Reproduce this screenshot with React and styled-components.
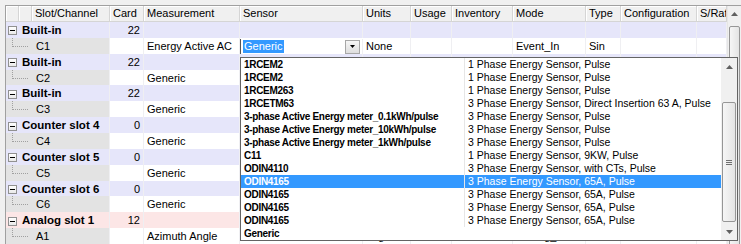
import React from 'react';
import styled, { createGlobalStyle } from 'styled-components';

const GlobalStyle = createGlobalStyle`
  html, body {
    margin: 0;
    padding: 0;
    background: #f0f0f0;
    font-family: "Liberation Sans", Arial, sans-serif;
    font-size: 11px;
    color: #000;
  }
`;

// Column widths of the grid body (first one spans the two blank + slot columns)
const bodyCols = '104px 34px 96px 123px 48px 41px 61px 73px 35px 76px 30px';
const headCols = '13px 13px 78px 34px 96px 123px 48px 41px 61px 73px 35px 76px 30px';

const Page = styled.div`
  padding: 5px 0 0 5px;
  height: 239px;
  overflow: hidden;
`;

const Frame = styled.div`
  position: relative;
  display: flex;
  border-left: 1px solid #a0a0a0;
  border-top: 1px solid #a0a0a0;
  height: 238px;
  background: #ffffff;
`;

const Grid = styled.div`
  width: 721px;
  display: flex;
  flex-direction: column;
`;

const HeaderRow = styled.div`
  display: grid;
  grid-template-columns: ${headCols};
  height: 16px;
  background: #f0f0f0;
`;

const HeadCell = styled.div`
  display: flex;
  align-items: center;
  padding-left: 3px;
  border-right: 1px solid #d5d5d5;
  border-bottom: 1px solid #d5d5d5;
  box-shadow: inset 1px 1px 0 #ffffff;
  white-space: nowrap;
  overflow: hidden;
`;

const rowBg = { group: '#e6e6fa', analog: '#fce6e6', child: '#ffffff' };

const Row = styled.div`
  display: grid;
  grid-template-columns: ${bodyCols};
  height: 16px;
  background: ${p => rowBg[p.$kind]};
`;

const Cell = styled.div`
  display: flex;
  align-items: center;
  justify-content: ${p => (p.$right ? 'flex-end' : 'flex-start')};
  padding: 0 3px;
  border-right: 1px solid #efeff2;
  white-space: nowrap;
  overflow: hidden;
`;

const TreeCell = styled.div`
  display: flex;
  align-items: center;
  border-right: 1px solid #efeff2;
  background: ${p => (p.$child ? '#e3e3e3' : 'transparent')};
  white-space: nowrap;
  overflow: hidden;
`;

const Expander = styled.div`
  width: 7px;
  height: 7px;
  margin: 2px 5px 0 2px;
  border: 1px solid #919191;
  background: linear-gradient(#ffffff, #e9e9e9);
  display: flex;
  align-items: center;
  justify-content: center;
  flex: none;
  &::after {
    content: '';
    width: 5px;
    height: 1px;
    background: #000;
  }
`;

const TreeLine = styled.div`
  align-self: flex-start;
  width: 15px;
  height: 8px;
  margin: 0 8px 0 6px;
  border-left: 1px dotted #a0a0a0;
  border-bottom: 1px dotted #a0a0a0;
  flex: none;
`;

const GroupName = styled.span`
  font-weight: bold;
  font-size: 11.5px;
`;

const Editor = styled.div`
  display: flex;
  align-items: center;
  height: 16px;
  margin-top: 1px;
  background: #fff;
  border-left: 1px solid #555;
  border-right: 1px solid #efeff2;
`;

const Selected = styled.span`
  margin-left: 2px;
  padding: 0 1px;
  background: #3399ff;
  color: #fff;
  line-height: 13px;
`;

const DropButton = styled.div`
  margin-left: auto;
  margin-right: 2px;
  width: 15px;
  height: 14px;
  box-sizing: border-box;
  border: 1px solid #a7a7a7;
  background: linear-gradient(#f6f6f6, #dedede);
  display: flex;
  align-items: center;
  justify-content: center;
`;

const VScroll = styled.div`
  width: 14px;
  display: flex;
  flex-direction: column;
  background: #f0f0f0;
  border-left: 1px solid #e6e6e6;
`;

const ArrowButton = styled.div`
  height: ${p => p.$h || 17}px;
  margin-top: ${p => (p.$end ? 'auto' : '0')};
  display: flex;
  align-items: center;
  justify-content: center;
  flex: none;
`;

const Thumb = styled.div`
  margin: ${p => p.$top}px 1px 0 1px;
  height: ${p => p.$h}px;
  border: 1px solid #969696;
  border-radius: 2px;
  background: linear-gradient(90deg, #f6f6f6, #e4e4e4);
  display: flex;
  flex-direction: column;
  align-items: center;
  justify-content: center;
  gap: 1px;
  flex: none;
`;

const Grip = styled.div`
  width: 6px;
  height: 1px;
  background: #6f6f6f;
`;

const DropList = styled.div`
  position: absolute;
  left: 234px;
  top: 51px;
  width: 496px;
  height: 182px;
  border: 1px solid #646464;
  background: #fff;
  display: flex;
  z-index: 5;
`;

const Items = styled.div`
  width: 480px;
  display: flex;
  flex-direction: column;
`;

const Item = styled.div`
  display: grid;
  grid-template-columns: 223px 1fr;
  height: 13px;
  background: ${p => (p.$sel ? '#3399ff' : 'transparent')};
  color: ${p => (p.$sel ? '#fff' : '#000')};
`;

const ItemName = styled.div`
  font-weight: bold;
  font-size: 10px;
  letter-spacing: -0.3px;
  padding-left: 3px;
  line-height: 13px;
  white-space: nowrap;
  overflow: hidden;
`;

const ItemDesc = styled.div`
  font-size: 10.5px;
  padding-left: 3px;
  line-height: 13px;
  white-space: nowrap;
  border-left: ${p => (p.$empty ? 'none' : '1px solid #e6e6e6')};
`;

const ListScroll = styled.div`
  width: 16px;
  display: flex;
  flex-direction: column;
  background: #f0f0f0;
`;

const Chevron = ({ down }) => (
  <svg width="7" height="4" viewBox="0 0 7 4">
    <path d={down ? 'M0 0h7L3.5 4z' : 'M0 4h7L3.5 0z'} fill="#606060" />
  </svg>
);

// Child rows C2..C6 sit under the open list, so only what shows is filled in
const rows = [
  { kind: 'group', name: 'Built-in', card: '22' },
  { kind: 'child', name: 'C1', meas: 'Energy Active AC', editing: true, units: 'None', mode: 'Event_In', type: 'Sin' },
  { kind: 'group', name: 'Built-in', card: '22' },
  { kind: 'child', name: 'C2', meas: 'Generic' },
  { kind: 'group', name: 'Built-in', card: '22' },
  { kind: 'child', name: 'C3', meas: 'Generic' },
  { kind: 'group', name: 'Counter slot 4', card: '0' },
  { kind: 'child', name: 'C4', meas: 'Generic' },
  { kind: 'group', name: 'Counter slot 5', card: '0' },
  { kind: 'child', name: 'C5', meas: 'Generic' },
  { kind: 'group', name: 'Counter slot 6', card: '0' },
  { kind: 'child', name: 'C6', meas: 'Generic' },
  { kind: 'analog', name: 'Analog slot 1', card: '12' },
  { kind: 'child', name: 'A1', meas: 'Azimuth Angle', sensor: 'Altimeter Azimuth 5V', units: 'deg arc', mode: 'Analog_In', type: '15V', config: 'Differential' },
];

const sensors = [
  ['1RCEM2', '1 Phase Energy Sensor, Pulse'],
  ['1RCEM2', '1 Phase Energy Sensor, Pulse'],
  ['1RCEM263', '1 Phase Energy Sensor, Pulse'],
  ['1RCETM63', '3 Phase Energy Sensor, Direct Insertion 63 A, Pulse'],
  ['3-phase Active Energy meter_0.1kWh/pulse', '3 Phase Energy Sensor, Pulse'],
  ['3-phase Active Energy meter_10kWh/pulse', '3 Phase Energy Sensor, Pulse'],
  ['3-phase Active Energy meter_1kWh/pulse', '3 Phase Energy Sensor, Pulse'],
  ['C11', '1 Phase Energy Sensor, 9KW, Pulse'],
  ['ODIN4110', '3 Phase Energy Sensor, with CTs, Pulse'],
  ['ODIN4165', '3 Phase Energy Sensor, 65A, Pulse'],
  ['ODIN4165', '3 Phase Energy Sensor, 65A, Pulse'],
  ['ODIN4165', '3 Phase Energy Sensor, 65A, Pulse'],
  ['ODIN4165', '3 Phase Energy Sensor, 65A, Pulse'],
  ['Generic', ''],
];

const headers = ['', '', 'Slot/Channel', 'Card', 'Measurement', 'Sensor', 'Units', 'Usage', 'Inventory', 'Mode', 'Type', 'Configuration', 'S/Rate'];

const App = () => (
  <>
    <GlobalStyle />
    <Page>
      <Frame>
        <Grid>
          <HeaderRow>
            {headers.map((h, i) => (
              <HeadCell key={i}>{h}</HeadCell>
            ))}
          </HeaderRow>
          {rows.map((r, i) =>
            r.kind === 'child' ? (
              <Row key={i} $kind="child">
                <TreeCell $child>
                  <TreeLine />
                  {r.name}
                </TreeCell>
                <Cell />
                <Cell>{r.meas}</Cell>
                {r.editing ? (
                  <Editor>
                    <Selected>Generic</Selected>
                    <DropButton>
                      <svg width="5" height="3" viewBox="0 0 5 3">
                        <path d="M0 0h5L2.5 3z" fill="#000" />
                      </svg>
                    </DropButton>
                  </Editor>
                ) : (
                  <Cell>{r.sensor}</Cell>
                )}
                <Cell>{r.units}</Cell>
                <Cell />
                <Cell />
                <Cell>{r.mode}</Cell>
                <Cell>{r.type}</Cell>
                <Cell>{r.config}</Cell>
                <Cell />
              </Row>
            ) : (
              <Row key={i} $kind={r.kind}>
                <TreeCell>
                  <Expander />
                  <GroupName>{r.name}</GroupName>
                </TreeCell>
                <Cell $right>{r.card}</Cell>
                <Cell />
                <Cell />
                <Cell />
                <Cell />
                <Cell />
                <Cell />
                <Cell />
                <Cell />
                <Cell />
              </Row>
            )
          )}
        </Grid>
        <VScroll>
          <ArrowButton $h={16}>
            <Chevron />
          </ArrowButton>
          <Thumb $top={4} $h={260} />
        </VScroll>

        <DropList>
          <Items>
            {sensors.map(([name, desc], i) => (
              <Item key={i} $sel={i === 9}>
                <ItemName>{name}</ItemName>
                <ItemDesc $empty={!desc}>{desc}</ItemDesc>
              </Item>
            ))}
          </Items>
          <ListScroll>
            <ArrowButton>
              <Chevron />
            </ArrowButton>
            <Thumb $top={27} $h={118}>
              <Grip />
              <Grip />
              <Grip />
            </Thumb>
            <ArrowButton $end>
              <Chevron down />
            </ArrowButton>
          </ListScroll>
        </DropList>
      </Frame>
    </Page>
  </>
);

export default App;
